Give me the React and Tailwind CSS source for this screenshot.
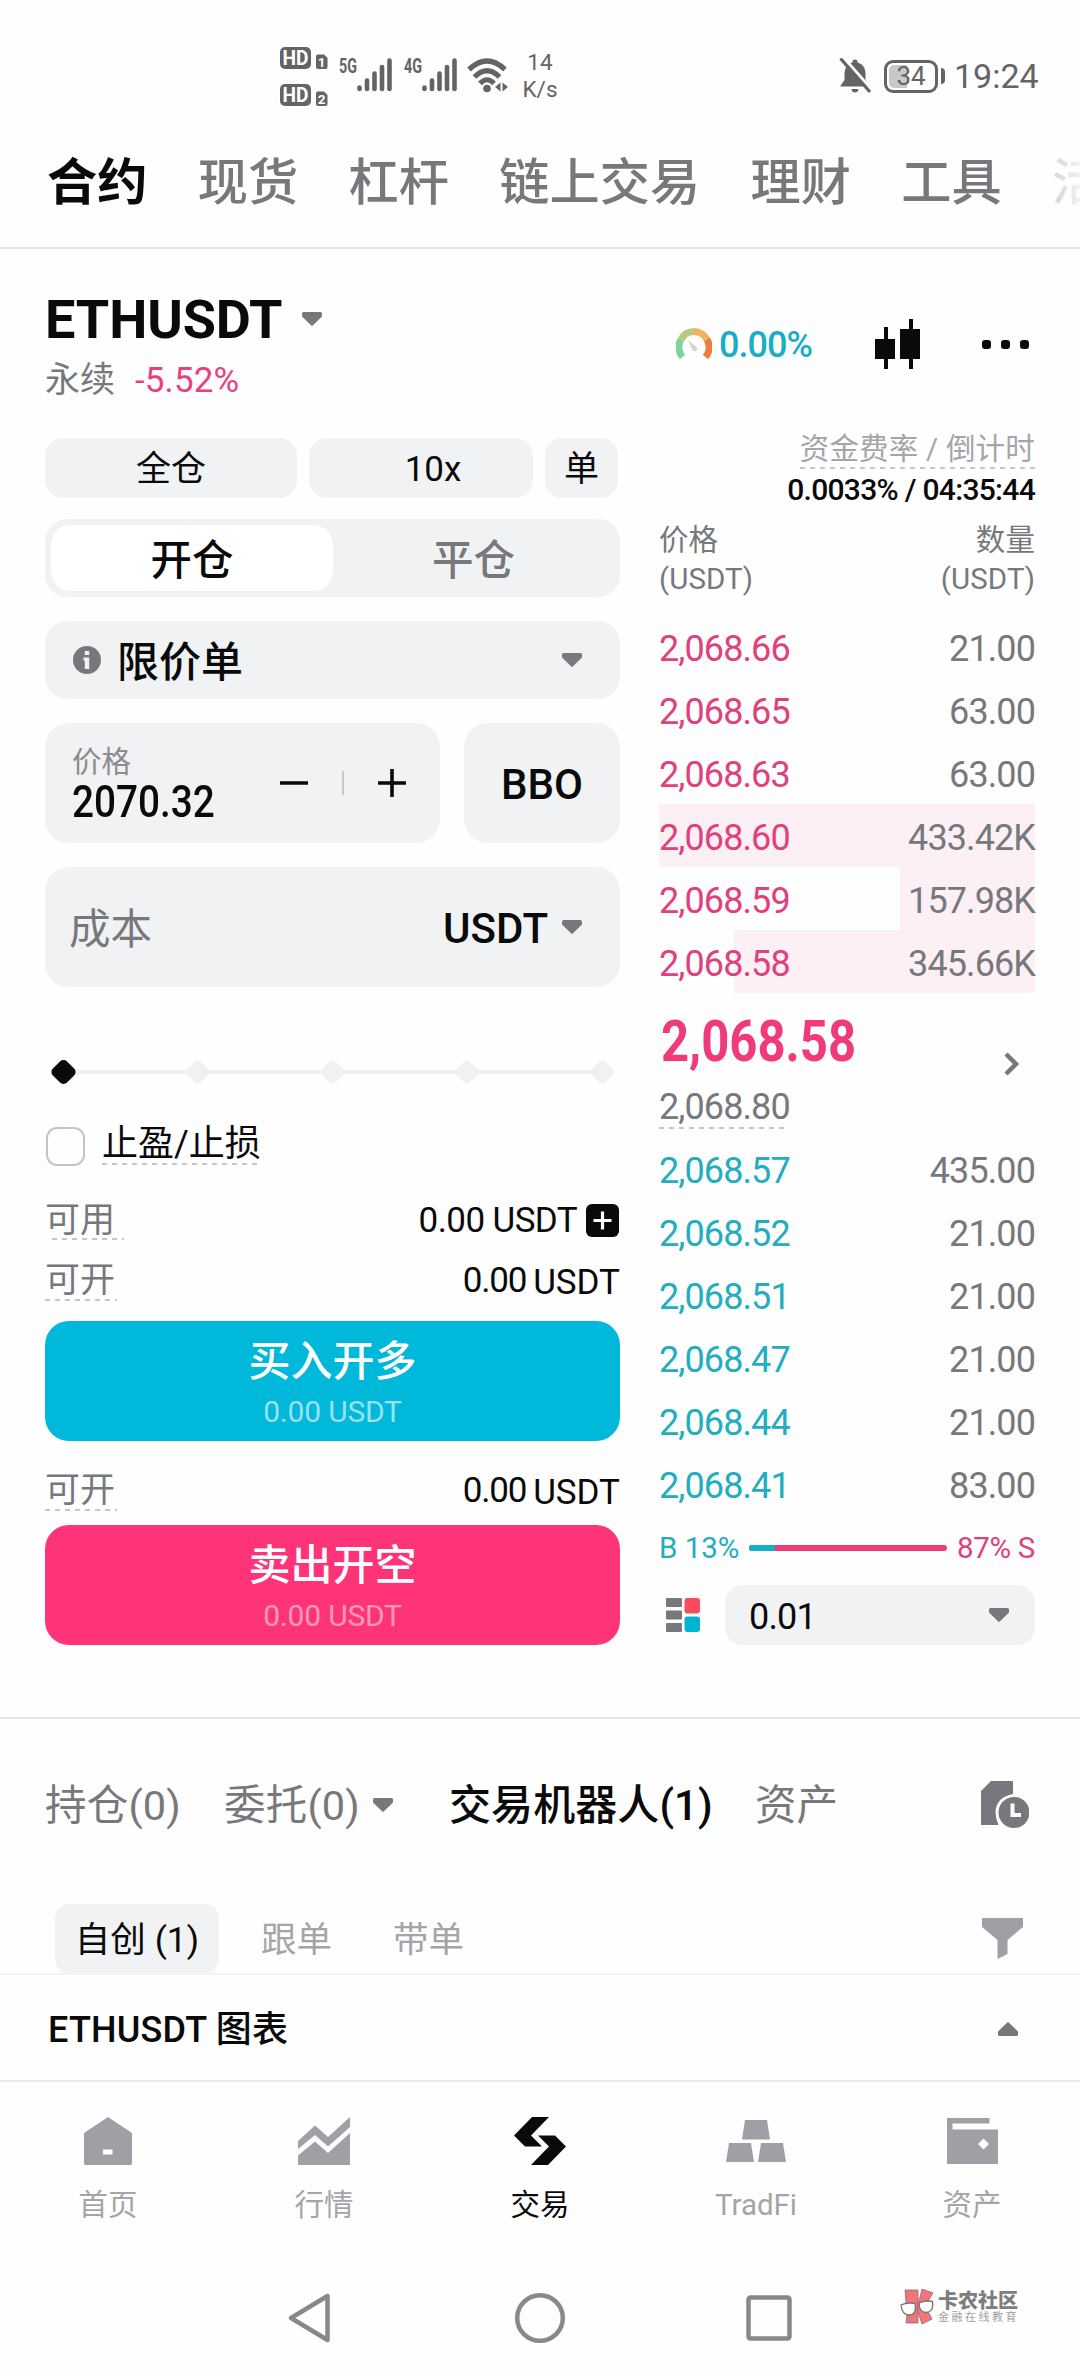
import React from 'react';

const topTabs = ['合约', '现货', '杠杆', '链上交易', '理财', '工具', '活动'];

const asks = [
  { price: '2,068.66', qty: '21.00', depth: 0 },
  { price: '2,068.65', qty: '63.00', depth: 0 },
  { price: '2,068.63', qty: '63.00', depth: 0 },
  { price: '2,068.60', qty: '433.42K', depth: 100 },
  { price: '2,068.59', qty: '157.98K', depth: 35.8 },
  { price: '2,068.58', qty: '345.66K', depth: 80 },
];

const bids = [
  { price: '2,068.57', qty: '435.00' },
  { price: '2,068.52', qty: '21.00' },
  { price: '2,068.51', qty: '21.00' },
  { price: '2,068.47', qty: '21.00' },
  { price: '2,068.44', qty: '21.00' },
  { price: '2,068.41', qty: '83.00' },
];

const Caret = ({ className = '', up }) => (
  <svg width="20" height="14" viewBox="0 0 20 14" className={`shrink-0 ${up ? 'rotate-180' : ''} ${className}`}>
    <path d="M1.5 0H18.5Q20 0 20 1.5V4.5L11 13.3Q10 14.3 9 13.3L0 4.5V1.5Q0 0 1.5 0Z" fill="#77787c" />
  </svg>
);

const Dashes = ({ className = '' }) => (
  <div
    className={`absolute h-[2px] bg-[repeating-linear-gradient(90deg,#c6c6c8_0_5px,transparent_5px_10px)] ${className}`}
  />
);

const HdIcon = ({ n }) => (
  <svg width="48" height="22" viewBox="0 0 48 22">
    <rect x="0" y="0" width="31" height="22" rx="5" fill="#646464" />
    <text x="15.5" y="18" textAnchor="middle" fontSize="19.5" fontWeight="700" fill="#fff" textLength="26" lengthAdjust="spacingAndGlyphs">
      HD
    </text>
    <path d="M38 7.500H44L47.500 11V20Q47.500 22 45.500 22H38Q36 22 36 20V9.500Q36 7.500 38 7.500Z" fill="#646464" />
    <text x="41.700" y="20" textAnchor="middle" fontSize="13.5" fontWeight="700" fill="#fff">
      {n}
    </text>
  </svg>
);

const Signal = ({ label }) => (
  <svg width="54" height="46" viewBox="0 -5 54 46" className="overflow-visible">
    <text x="0" y="14.500" fontSize="20" fontWeight="700" fill="#646464" textLength="18" lengthAdjust="spacingAndGlyphs">
      {label}
    </text>
    <g stroke="#646464" strokeWidth="4.6" strokeLinecap="round">
      <path d="M20.5 29.5V31M28 22.500V31M35.5 15.500V31M43 9V31M50.5 2.500V31" />
    </g>
  </svg>
);

const StatusBar = () => (
  <div className="flex h-[124px] items-center pt-[28px] pl-[280px] text-[#646464]">
    <div className="flex flex-col gap-[15px]">
      <HdIcon n="1" />
      <HdIcon n="2" />
    </div>
    <div className="ml-[11px] flex gap-[11px]">
      <Signal label="5G" />
      <Signal label="4G" />
    </div>
    <svg width="42" height="36" viewBox="0 0 42 36" className="ml-[9px]">
      <g fill="none" stroke="#646464" strokeWidth="5.2" strokeLinecap="butt">
        <path d="M2 11.500Q20 -5.500 38 11.500" />
        <path d="M7.500 19Q20 6.500 32.500 19" />
        <path d="M13 25.500Q20 18 27 25.500" />
      </g>
      <circle cx="20" cy="30.500" r="3.800" fill="#646464" />
      <path d="M33.500 24.500V33.500L28 29ZM35.500 33.500V24.500L41 29Z" fill="#646464" />
    </svg>
    <div className="ml-[8px] w-[46px] text-center text-[22.5px] leading-[27px]">
      <div>14</div>
      <div>K/s</div>
    </div>
    <svg width="34" height="36" viewBox="0 0 34 36" className="ml-[276px]">
      <path
        d="M16 1.500Q18.500 1.500 18.700 4.500Q26 6.500 26.500 15V22L31 28.500H1L5.500 22V15Q6 6.500 13.300 4.500Q13.500 1.500 16 1.500ZM12.500 31H19.500Q19 34.500 16 34.500Q13 34.500 12.500 31Z"
        fill="#646464"
      />
      <path d="M4 -1L34 33" stroke="#fefefe" strokeWidth="3" />
      <path d="M1.500 0.500L31 34" stroke="#646464" strokeWidth="3.200" />
    </svg>
    <div className="relative ml-[11px] flex h-[33px] w-[54px] items-center justify-center rounded-[9px] border-[3px] border-[#646464]">
      <div className="absolute top-[2px] left-[2px] h-[23px] w-[18px] rounded-l-[5px] bg-[#c8c8c8]" />
      <span className="relative text-[26px] leading-none">34</span>
    </div>
    <div className="ml-[3px] h-[16px] w-[4px] rounded-r bg-[#646464]" />
    <span className="ml-[9px] text-[34px] leading-none">19:24</span>
  </div>
);

const Gauge = () => (
  <svg width="36" height="34" viewBox="0 0 36 34">
    <g fill="none" strokeWidth="7">
      <path d="M6.500 30A14.500 14.500 0 0 1 5 12.500" stroke="#7fd3a0" />
      <path d="M5 12.800A14.500 14.500 0 0 1 18 4.500" stroke="#b5cc7e" />
      <path d="M17.800 4.500A14.500 14.500 0 0 1 31 13" stroke="#f0b360" />
      <path d="M30.900 12.500A14.500 14.500 0 0 1 29.500 30" stroke="#ec7d3e" />
    </g>
    <path d="M12 13L20.500 20Q22 23 19.500 24Q17 25 15.800 22Z" fill="#d4d5d8" />
  </svg>
);

const PairHeader = () => (
  <div className="flex h-[188px] pr-[45px] pl-[45px]">
    <div className="pt-[35px]">
      <div className="flex h-[68px] items-center">
        <span className="pt-[2px] text-[54px] leading-none font-bold tracking-[-0.1px] text-[#0a0a0b]">ETHUSDT</span>
        <Caret className="ml-[20px]" />
      </div>
      <div className="flex h-[54px] items-center text-[35px] leading-none">
        <span className="text-[#77787c]">永续</span>
        <span className="ml-[20px] tracking-[0.1px] text-[#e8407f]">-5.52%</span>
      </div>
    </div>
    <div className="ml-auto flex h-[188px] items-center">
      <Gauge />
      <span className="ml-[7px] pt-[2px] text-[36px] leading-none font-medium tracking-[-1px] text-[#1aaec6]">0.00%</span>
      <svg width="46" height="50" viewBox="0 0 46 50" className="ml-[63px]">
        <path d="M0 20H9V8H13V20H20V40H13V50H9V40H0ZM25 10H34V0H38V10H45V40H38V50H34V40H25Z" fill="#0a0a0b" />
      </svg>
      <div className="mr-[6px] ml-[61px] flex gap-[10px]">
        <i className="size-[9px] rounded-[3px] bg-[#0a0a0b]" />
        <i className="size-[9px] rounded-[3px] bg-[#0a0a0b]" />
        <i className="size-[9px] rounded-[3px] bg-[#0a0a0b]" />
      </div>
    </div>
  </div>
);

const OpenableRow = ({ className }) => (
  <div className={`flex h-[40px] items-center justify-between text-[35px] leading-none ${className}`}>
    <div className="relative text-[#77787c]">
      可开
      <Dashes className="-bottom-[3px] left-0 w-[72px]" />
    </div>
    <div className="flex gap-[7px] text-[#0a0a0b]">
      <span className="tracking-[-1.2px]">0.00</span>
      <span className="relative top-[2px]">USDT</span>
    </div>
  </div>
);

const OrderForm = () => (
  <div className="w-[575px] text-[#0a0a0b]">
    <div className="flex gap-[12px] text-[35px] leading-none">
      <div className="flex h-[60px] w-[252px] items-center justify-center rounded-[18px] bg-[#f1f2f4] pt-[2px]">全仓</div>
      <div className="flex h-[60px] w-[224px] items-center justify-center rounded-[18px] bg-[#f1f2f4] pt-[2px] pl-[24px]">
        10x
      </div>
      <div className="flex h-[60px] w-[73px] items-center justify-center rounded-[18px] bg-[#f1f2f4] pt-[2px]">单</div>
    </div>

    <div className="mt-[21px] flex h-[78px] rounded-[22px] bg-[#f1f2f4] p-[6px] text-[41.5px] leading-none font-medium">
      <div className="flex w-[282px] items-center justify-center rounded-[20px] bg-white pt-[5px]">开仓</div>
      <div className="flex flex-1 items-center justify-center pt-[5px] text-[#77787c]">平仓</div>
    </div>

    <div className="mt-6 flex h-[78px] items-center rounded-[22px] bg-[#f1f2f4] pr-[38px] pl-[28px]">
      <svg width="28" height="28" viewBox="0 0 28 28">
        <circle cx="14" cy="14" r="14" fill="#77787c" />
        <path d="M11.800 5H16.200V9H11.800ZM10.500 11.500H16.200V23H11.800V14.500H10.500Z" fill="#f1f2f4" />
      </svg>
      <span className="ml-[16px] pt-[5px] text-[42px] leading-none font-medium">限价单</span>
      <Caret className="ml-auto" />
    </div>

    <div className="mt-6 flex gap-6">
      <div className="flex h-[120px] w-[395px] items-center rounded-[24px] bg-[#f1f2f4] pl-[27px]">
        <div className="w-[208px]">
          <div className="text-[29.5px] leading-[36px] text-[#8b8c90]">价格</div>
          <div className="relative top-[1px] origin-left scale-x-88 text-[44px] leading-[42px] font-medium">2070.32</div>
        </div>
        <svg width="128" height="28" viewBox="0 0 128 28">
          <path d="M0 14H28M98 14H126M112 0V28" stroke="#0a0a0b" strokeWidth="3.600" fill="none" />
          <path d="M63 2V26" stroke="#c9cacc" strokeWidth="2" />
        </svg>
      </div>
      <div className="flex h-[120px] flex-1 items-center justify-center rounded-[24px] bg-[#f1f2f4] pt-[3px] text-[42px] leading-none font-medium">
        BBO
      </div>
    </div>

    <div className="mt-6 flex h-[120px] items-center rounded-[24px] bg-[#f1f2f4] pr-[38px] pl-[24px]">
      <span className="pt-[5px] text-[41.5px] leading-none text-[#77787c]">成本</span>
      <span className="ml-auto pt-[4px] text-[42px] leading-none font-medium">USDT</span>
      <Caret className="ml-[14px]" />
    </div>

    <svg width="575" height="48" viewBox="0 0 575 48" className="mt-[61px]">
      <path d="M18 24H557" stroke="#f1f1f2" strokeWidth="4" />
      {[153, 287.5, 422, 557].map((x) => (
        <rect key={x} x={x - 9.5} y="14.5" width="19" height="19" rx="4.5" fill="#f1f1f2" transform={`rotate(45 ${x} 24)`} />
      ))}
      <rect x="8.500" y="14" width="20" height="20" rx="5" fill="#0a0a0b" transform="rotate(45 18.500 24)" />
    </svg>

    <div className="mt-[30px] flex h-[40px] items-center text-[36px] leading-none">
      <div className="ml-[1px] size-[39px] rounded-[11px] border-[2.5px] border-[#c4c4c6]" />
      <div className="relative -top-[2px] ml-[17px]">
        止盈/止损
        <Dashes className="-bottom-[3px] left-0 w-full" />
      </div>
    </div>

    <div className="mt-[34px] flex h-[40px] items-center text-[35px] leading-none">
      <div className="relative text-[#77787c]">
        可用
        <Dashes className="-bottom-[2px] left-[7px] w-[72px]" />
      </div>
      <span className="ml-auto tracking-[-0.6px]">0.00 USDT</span>
      <svg width="33" height="33" viewBox="0 0 33 33" className="mr-[1px] ml-[9px]">
        <rect width="33" height="33" rx="6" fill="#0a0a0b" />
        <path d="M7.500 16.500H25.500M16.500 7.500V25.500" stroke="#fff" strokeWidth="3.200" />
      </svg>
    </div>

    <OpenableRow className="mt-[20px]" />

    <button className="mt-[21px] flex h-[120px] w-full flex-col items-center rounded-[24px] bg-[#00b8d9] pt-[17px] text-white">
      <span className="text-[42px] leading-[48px] font-medium">买入开多</span>
      <span className="mt-[8px] text-[30px] leading-[36px] tracking-[-0.2px] text-white/60">0.00 USDT</span>
    </button>

    <OpenableRow className="mt-[29px]" />

    <button className="mt-[15px] flex h-[120px] w-full flex-col items-center rounded-[24px] bg-[#ff3377] pt-[17px] text-white">
      <span className="text-[42px] leading-[48px] font-medium">卖出开空</span>
      <span className="mt-[8px] text-[30px] leading-[36px] tracking-[-0.2px] text-white/50">0.00 USDT</span>
    </button>
  </div>
);

const BookRow = ({ row, color, className = '' }) => (
  <div
    className={`relative flex h-[63px] items-center justify-between text-[36px] leading-none tracking-[-0.9px] ${className}`}
  >
    {row.depth > 0 && <div className="absolute inset-y-0 right-0 bg-[#fdf0f5]" style={{ width: `${row.depth}%` }} />}
    <span className={`relative ${color}`}>{row.price}</span>
    <span className="relative text-[#77787c]">{row.qty}</span>
  </div>
);

const OrderBook = () => (
  <div className="-mt-[6px] w-[376px]">
    <div className="flex justify-end">
      <div className="relative h-[37px] text-[29.5px] leading-[34px] tracking-[0.2px] text-[#a4a5a9]">
        资金费率 / 倒计时
        <Dashes className="bottom-0 left-0 w-full" />
      </div>
    </div>
    <div className="mt-[3px] text-right text-[30px] leading-[36px] font-medium tracking-[-0.7px] text-[#0a0a0b]">
      0.0033% / 04:35:44
    </div>
    <div className="mt-[13px] flex justify-between text-[29.5px] leading-[39px] tracking-[0.1px] text-[#77787c]">
      <div>
        价格
        <br />
        (USDT)
      </div>
      <div className="text-right">
        数量
        <br />
        (USDT)
      </div>
    </div>

    <div className="mt-[16px]">
      {asks.map((row) => (
        <BookRow key={row.price} row={row} color="text-[#e0407c]" className="pt-[4px]" />
      ))}
    </div>

    <div className="flex h-[146px] items-center justify-between pr-[15px] pb-[4px]">
      <div className="relative">
        <div className="h-[80px] origin-left translate-x-[2px] scale-x-86 text-[57px] leading-[80px] font-bold text-[#f03a7a]">
          2,068.58
        </div>
        <div className="relative mt-[5px] inline-block text-[36px] leading-[40px] tracking-[-0.9px] text-[#77787c]">
          2,068.80
          <Dashes className="-bottom-[2px] left-0 w-[126px]" />
        </div>
      </div>
      <svg width="16" height="24" viewBox="0 0 16 24">
        <path d="M2 2L12 12L2 22" fill="none" stroke="#77787c" strokeWidth="4.500" />
      </svg>
    </div>

    <div>
      {bids.map((row) => (
        <BookRow key={row.price} row={row} color="text-[#22adc0]" className="pt-[1px]" />
      ))}
    </div>

    <div className="mt-[11px] flex h-[40px] items-center justify-between text-[29.5px] leading-none">
      <span className="pt-[2px] text-[#22adc0]">B 13%</span>
      <div className="flex h-[6px] w-[198px] overflow-hidden rounded-full bg-[#f03a7a]">
        <div className="w-[13%] bg-[#15b0c6]" />
      </div>
      <span className="pt-[2px] tracking-[-0.3px] text-[#e0407c]">87% S</span>
    </div>

    <div className="mt-[17px] flex h-[60px] items-center">
      <svg width="34" height="34" viewBox="0 0 34 34" className="ml-[7px]">
        <rect x="0" y="0" width="16" height="9" rx="1" fill="#77787c" />
        <rect x="0" y="12.500" width="16" height="9" rx="1" fill="#77787c" />
        <rect x="0" y="25" width="16" height="9" rx="1" fill="#77787c" />
        <rect x="18.500" y="0" width="15.500" height="15.500" rx="3" fill="#fb4a5c" />
        <rect x="18.500" y="18.500" width="15.500" height="15.500" rx="3" fill="#00b4d0" />
      </svg>
      <div className="ml-[25px] flex h-[60px] flex-1 items-center justify-between rounded-[18px] bg-[#f1f2f4] pr-[26px] pl-[24px] text-[36px] leading-none tracking-[-0.8px] text-[#0a0a0b]">
        <span className="pt-[3px]">0.01</span>
        <Caret />
      </div>
    </div>
  </div>
);

const Positions = () => (
  <div className="mt-[72px] border-t-2 border-[#e6e6e7]">
    <div className="flex h-[172px] items-center pr-[51px] pl-[45px] text-[41.5px] leading-none text-[#77787c]">
      <span className="pt-[2px] tracking-[0.2px]">持仓(0)</span>
      <span className="ml-[43px] pt-[2px] tracking-[0.2px]">委托(0)</span>
      <Caret className="ml-[13px]" />
      <span className="ml-[56px] pt-[2px] text-[42px] font-medium tracking-[0.1px] text-[#0a0a0b]">交易机器人(1)</span>
      <span className="ml-[42px] pt-[2px]">资产</span>
      <svg width="48" height="48" viewBox="0 0 48 48" className="ml-auto">
        <path d="M10 0H32V13Q16 16 14.500 30Q14.300 37 17.500 44H0V10Z" fill="#77787c" />
        <circle cx="33" cy="31.500" r="15.500" fill="#77787c" />
        <path d="M31.500 22.500V34H40" fill="none" stroke="#fff" strokeWidth="4" />
      </svg>
    </div>

    <div className="mt-[13px] flex h-[69px] items-center pr-[57px] pl-[55px] text-[35.5px] leading-none text-[#a4a5a9]">
      <div className="flex h-full w-[164px] items-center justify-center rounded-[14px] bg-[#f1f2f4] pt-[5px] text-[#0a0a0b]">
        自创 (1)
      </div>
      <span className="ml-[42px] pt-[5px]">跟单</span>
      <span className="ml-[61px] pt-[5px]">带单</span>
      <svg width="41" height="41" viewBox="0 0 41 41" className="ml-auto">
        <path d="M0 0H41V9L25.500 22V36L15.500 41V22L0 9Z" fill="#9ea0a5" />
      </svg>
    </div>

    <div className="flex h-[107px] items-center border-t-2 border-[#f3f3f4] pt-[3px] pr-[62px] pl-[48px]">
      <span className="pt-[2px] text-[36px] leading-none font-medium tracking-[0.2px] text-[#0a0a0b]">ETHUSDT 图表</span>
      <Caret up className="ml-auto" />
    </div>
  </div>
);

const navItems = [
  {
    label: '首页',
    icon: (
      <svg width="48" height="48" viewBox="0 0 48 48">
        <path fillRule="evenodd" d="M24 0L48 16V46.500Q48 48 46.500 48H1.500Q0 48 0 46.500V16ZM19 32.500V37.500H28.500V32.500Z" fill="#9ea0a5" />
      </svg>
    ),
  },
  {
    label: '行情',
    icon: (
      <svg width="52" height="48" viewBox="0 0 52 48">
        <path d="M0 24L17 8.500L30 20L52 0V10L30 29.500L17 18L0 32ZM0 38.500L17 24.500L30 36L52 16V48H0Z" fill="#9ea0a5" />
      </svg>
    ),
  },
  {
    label: '交易',
    active: true,
    icon: (
      <svg width="52" height="48" viewBox="0 0 52 48">
        <path d="M18 0H35L17 18.500L28 29.500H11L0 18.500ZM24 18.500H41L52 29.500L34 48H17L35 29.500Z" fill="#0a0a0b" />
      </svg>
    ),
  },
  {
    label: 'TradFi',
    icon: (
      <svg width="60" height="42" viewBox="0 0 60 42">
        <path d="M19 0H41L44 19.500H16ZM3 23H25L28 42H0ZM35 23H57L60 42H32Z" fill="#9ea0a5" />
      </svg>
    ),
  },
  {
    label: '资产',
    icon: (
      <svg width="51" height="46" viewBox="0 0 51 46">
        <path fillRule="evenodd" d="M0 0H42.500V5.500H5.500V11.500H51V46H0ZM36.500 20.500L31 26L36.500 31.500L42 26Z" fill="#9ea0a5" />
      </svg>
    ),
  },
];

const BottomNav = () => (
  <div className="grid h-[180px] grid-cols-5 border-t-2 border-[#e8e8e9] pt-[34px]">
    {navItems.map((item) => (
      <div key={item.label} className="flex flex-col items-center">
        <div className="flex h-[50px] items-center">{item.icon}</div>
        <span className={`mt-[21px] text-[29.5px] leading-[36px] ${item.active ? 'text-[#0a0a0b]' : 'text-[#a4a5a9]'}`}>
          {item.label}
        </span>
      </div>
    ))}
  </div>
);

const SystemNav = () => (
  <div className="flex h-[116px] items-center pl-[286px]">
    <svg width="46" height="52" viewBox="0 0 46 52">
      <path d="M41.500 4V48L5 26Z" fill="none" stroke="#888" strokeWidth="4.500" strokeLinejoin="round" />
    </svg>
    <svg width="52" height="52" viewBox="0 0 52 52" className="ml-[182px]">
      <circle cx="26" cy="26" r="22.800" fill="none" stroke="#888" strokeWidth="4.500" />
    </svg>
    <svg width="48" height="48" viewBox="0 0 48 48" className="ml-[179px]">
      <rect x="3.500" y="3.500" width="41" height="41" rx="2" fill="none" stroke="#888" strokeWidth="4.500" />
    </svg>
    <div className="ml-[107px] flex items-center pb-[23px]">
      <svg width="34" height="36" viewBox="0 0 34 36">
        <g fill="#f4747c" stroke="#8a6a6c" strokeWidth="0.800">
          <path d="M5 1H18V34H6L7 26Z" />
          <path d="M22 0L33 4L25 17L32 30L22 35L17 20Z" />
        </g>
        <g fill="#fff" stroke="#777" strokeWidth="1.300">
          <path d="M1 16Q7 13 15 14.500Q17 26 9 26Q2 26 1 16Z" />
          <path d="M19 14Q25 11 32.500 12.500Q34 23 26 23.500Q19 23 19 14Z" />
        </g>
      </svg>
      <div className="ml-[4px] text-[#7d7d7f]">
        <div className="text-[20px] leading-[22px] font-black">卡农社区</div>
        <div className="text-[11px] leading-[12px] tracking-[2.5px] text-[#a0a0a2]">金融在线教育</div>
      </div>
    </div>
  </div>
);

const App = () => {
  return (
    <div className="h-[2376px] w-[1080px] overflow-hidden bg-[#fefefe] font-[Roboto,'Noto_Sans_CJK_SC',sans-serif]">
      <StatusBar />
      <div className="flex h-[125px] items-center gap-[50.4px] overflow-hidden border-b-2 border-[#e9e9ea] pb-[4px] pl-[47px] text-[50.2px] leading-none font-medium whitespace-nowrap text-[#77787c]">
        {topTabs.map((tab, i) => (
          <span
            key={tab}
            className={
              i === 0
                ? 'font-bold text-[#0a0a0b]'
                : i === topTabs.length - 1
                  ? 'bg-linear-to-r from-[#d5d5d7] to-[#fefefe] to-40% bg-clip-text text-transparent'
                  : ''
            }
          >
            {tab}
          </span>
        ))}
      </div>
      <div className="mt-[1px]">
        <PairHeader />
      </div>
      <div className="flex justify-between pr-[45px] pl-[45px]">
        <OrderForm />
        <OrderBook />
      </div>
      <Positions />
      <BottomNav />
      <SystemNav />
    </div>
  );
};

export default App;
